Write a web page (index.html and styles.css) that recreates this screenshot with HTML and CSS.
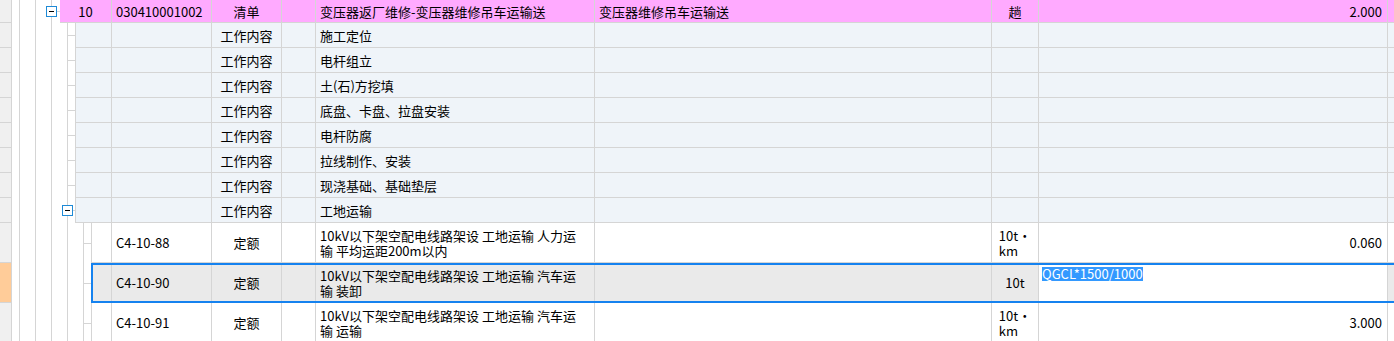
FILE: index.html
```html
<!DOCTYPE html>
<html lang="zh-CN">
<head>
    <meta charset="UTF-8">
    <meta name="viewport" content="width=device-width, initial-scale=1.0">
    <title>分部分项</title>
    <link rel="stylesheet" href="styles.css">
</head>
<body>
    <div class="sheet">
        <!-- 清单行 -->
        <div class="row list">
            <div class="gut"></div>
            <div class="ind"></div>
            <div class="ind"></div>
            <div class="ind"></div>
            <div class="ind open tick"></div>
            <div class="c ctr s5">10</div>
            <div class="c">030410001002</div>
            <div class="c ctr">清单</div>
            <div class="c"></div>
            <div class="c">变压器返厂维修-变压器维修吊车运输送</div>
            <div class="c">变压器维修吊车运输送</div>
            <div class="c ctr">趟</div>
            <div class="c num">2.000</div>
            <div class="c"></div>
            <span class="toggle l1"></span>
        </div>

        <!-- 工作内容 -->
        <div class="row work">
            <div class="gut"></div><div class="ind"></div><div class="ind"></div><div class="ind"></div>
            <div class="ind s2"></div><div class="ind tick"></div>
            <div class="c s3"></div><div class="c"></div>
            <div class="c ctr">工作内容</div><div class="c"></div>
            <div class="c">施工定位</div>
            <div class="c"></div><div class="c"></div><div class="c"></div><div class="c"></div>
        </div>
        <div class="row work">
            <div class="gut"></div><div class="ind"></div><div class="ind"></div><div class="ind"></div>
            <div class="ind s2"></div><div class="ind tick"></div>
            <div class="c s3"></div><div class="c"></div>
            <div class="c ctr">工作内容</div><div class="c"></div>
            <div class="c">电杆组立</div>
            <div class="c"></div><div class="c"></div><div class="c"></div><div class="c"></div>
        </div>
        <div class="row work">
            <div class="gut"></div><div class="ind"></div><div class="ind"></div><div class="ind"></div>
            <div class="ind s2"></div><div class="ind tick"></div>
            <div class="c s3"></div><div class="c"></div>
            <div class="c ctr">工作内容</div><div class="c"></div>
            <div class="c">土(石)方挖填</div>
            <div class="c"></div><div class="c"></div><div class="c"></div><div class="c"></div>
        </div>
        <div class="row work">
            <div class="gut"></div><div class="ind"></div><div class="ind"></div><div class="ind"></div>
            <div class="ind s2"></div><div class="ind tick"></div>
            <div class="c s3"></div><div class="c"></div>
            <div class="c ctr">工作内容</div><div class="c"></div>
            <div class="c">底盘、卡盘、拉盘安装</div>
            <div class="c"></div><div class="c"></div><div class="c"></div><div class="c"></div>
        </div>
        <div class="row work">
            <div class="gut"></div><div class="ind"></div><div class="ind"></div><div class="ind"></div>
            <div class="ind s2"></div><div class="ind tick"></div>
            <div class="c s3"></div><div class="c"></div>
            <div class="c ctr">工作内容</div><div class="c"></div>
            <div class="c">电杆防腐</div>
            <div class="c"></div><div class="c"></div><div class="c"></div><div class="c"></div>
        </div>
        <div class="row work">
            <div class="gut"></div><div class="ind"></div><div class="ind"></div><div class="ind"></div>
            <div class="ind s2"></div><div class="ind tick"></div>
            <div class="c s3"></div><div class="c"></div>
            <div class="c ctr">工作内容</div><div class="c"></div>
            <div class="c">拉线制作、安装</div>
            <div class="c"></div><div class="c"></div><div class="c"></div><div class="c"></div>
        </div>
        <div class="row work">
            <div class="gut"></div><div class="ind"></div><div class="ind"></div><div class="ind"></div>
            <div class="ind s2"></div><div class="ind tick"></div>
            <div class="c s3"></div><div class="c"></div>
            <div class="c ctr">工作内容</div><div class="c"></div>
            <div class="c">现浇基础、基础垫层</div>
            <div class="c"></div><div class="c"></div><div class="c"></div><div class="c"></div>
        </div>
        <div class="row work">
            <div class="gut"></div><div class="ind"></div><div class="ind"></div><div class="ind"></div>
            <div class="ind s2"></div><div class="ind tick"></div>
            <div class="c s3"></div><div class="c"></div>
            <div class="c ctr">工作内容</div><div class="c"></div>
            <div class="c">工地运输</div>
            <div class="c"></div><div class="c"></div><div class="c"></div><div class="c"></div>
            <span class="toggle l2"></span>
        </div>

        <!-- 定额子目 -->
        <div class="row quota">
            <div class="gut"></div><div class="ind"></div><div class="ind"></div><div class="ind"></div>
            <div class="ind s2"></div><div class="ind s2"></div><div class="ind tick"></div>
            <div class="c"></div>
            <div class="c">C4-10-88</div>
            <div class="c ctr">定额</div>
            <div class="c"></div>
            <div class="c two">10kV以下架空配电线路架设 工地运输 人力运<br>输 平均运距200m以内</div>
            <div class="c"></div>
            <div class="c ctr two">10t·<br>km</div>
            <div class="c num">0.060</div>
            <div class="c"></div>
        </div>
        <div class="row quota sel">
            <div class="gut"></div><div class="ind"></div><div class="ind"></div><div class="ind"></div>
            <div class="ind s2"></div><div class="ind s2"></div><div class="ind tick"></div>
            <div class="c"></div>
            <div class="c">C4-10-90</div>
            <div class="c ctr">定额</div>
            <div class="c"></div>
            <div class="c two">10kV以下架空配电线路架设 工地运输 汽车运<br>输 装卸</div>
            <div class="c"></div>
            <div class="c ctr">10t</div>
            <div class="c edit"><span class="picked">QGCL*1500/1000</span></div>
            <div class="c"></div>
        </div>
        <div class="row quota">
            <div class="gut"></div><div class="ind"></div><div class="ind"></div><div class="ind"></div>
            <div class="ind s2"></div><div class="ind s2"></div><div class="ind tick"></div>
            <div class="c"></div>
            <div class="c">C4-10-91</div>
            <div class="c ctr">定额</div>
            <div class="c"></div>
            <div class="c two">10kV以下架空配电线路架设 工地运输 汽车运<br>输 运输</div>
            <div class="c"></div>
            <div class="c ctr two">10t·<br>km</div>
            <div class="c num">3.000</div>
            <div class="c"></div>
        </div>
    </div>
</body>
</html>
```

FILE: styles.css
```css
body {
    margin: 0;
    background-color: #ffffff;
    color: #000000;
    font-family: "Noto Sans CJK SC", "Liberation Sans", sans-serif;
    font-size: 13px;
    overflow: hidden;
}

.sheet {
    width: 1394px;
}

/* one grid per row, same columns for every row */
.row {
    position: relative;
    display: grid;
    grid-template-columns: 12px 8px 16px 16px 8px 8px 8px 8px 8px 20px 100px 70px 34px 279px 397px 47px 349px 1fr;
    height: 25px;
}

.row.list {
    height: 23px;
}

.row.quota {
    height: 40px;
}

.row > div {
    display: flex;
    align-items: center;
    min-width: 0;
    overflow: hidden;
    white-space: nowrap;
    border-right: 1px solid #d5d5d5;
}

.s2 { grid-column: span 2; }
.s3 { grid-column: span 3; }
.s5 { grid-column: span 5; }

/* row header strip on the far left */
.gut {
    background-color: #f0f0f0;
    border-bottom: 1px solid #d5d5d5;
}

.sel .gut {
    background-color: #ffcc99;
}

/* tree indent columns */
.ind {
    background-color: #ffffff;
}

.ind.open {
    border-right: none !important;
}

.tick {
    background: linear-gradient(#d5d5d5, #d5d5d5) no-repeat 0 50% / 100% 1px;
}

/* data cells */
.c {
    padding: 0 4px;
    border-bottom: 1px solid #d5d5d5;
}

.ctr {
    justify-content: center;
}

.num {
    justify-content: flex-end;
    padding-right: 5px;
}

.two {
    line-height: 15px;
}

.list .c {
    background-color: #ffaaff;
}

.work .c {
    background-color: #eff4f9;
}

.sel .c {
    background-color: #eaeaea;
}

.sel .c.edit {
    background-color: #ffffff;
    align-items: flex-start;
    padding: 4px 3px 0;
}

.picked {
    background-color: #3399ff;
    color: #ffffff;
    line-height: 14px;
}

/* current row outline */
.sel::after {
    content: "";
    position: absolute;
    left: 91px;
    right: -2px;
    top: 0;
    bottom: 0;
    border: 2px solid #1582ef;
    pointer-events: none;
}

/* expand / collapse boxes */
.toggle {
    position: absolute;
    width: 11px;
    height: 11px;
    box-sizing: border-box;
    border: 1px solid #1e8ad6;
    background: #ffffff linear-gradient(#000000, #000000) no-repeat center / 5px 1px;
}

.toggle.l1 {
    left: 46px;
    top: 6px;
}

.toggle.l2 {
    left: 62px;
    top: 7px;
}
```
